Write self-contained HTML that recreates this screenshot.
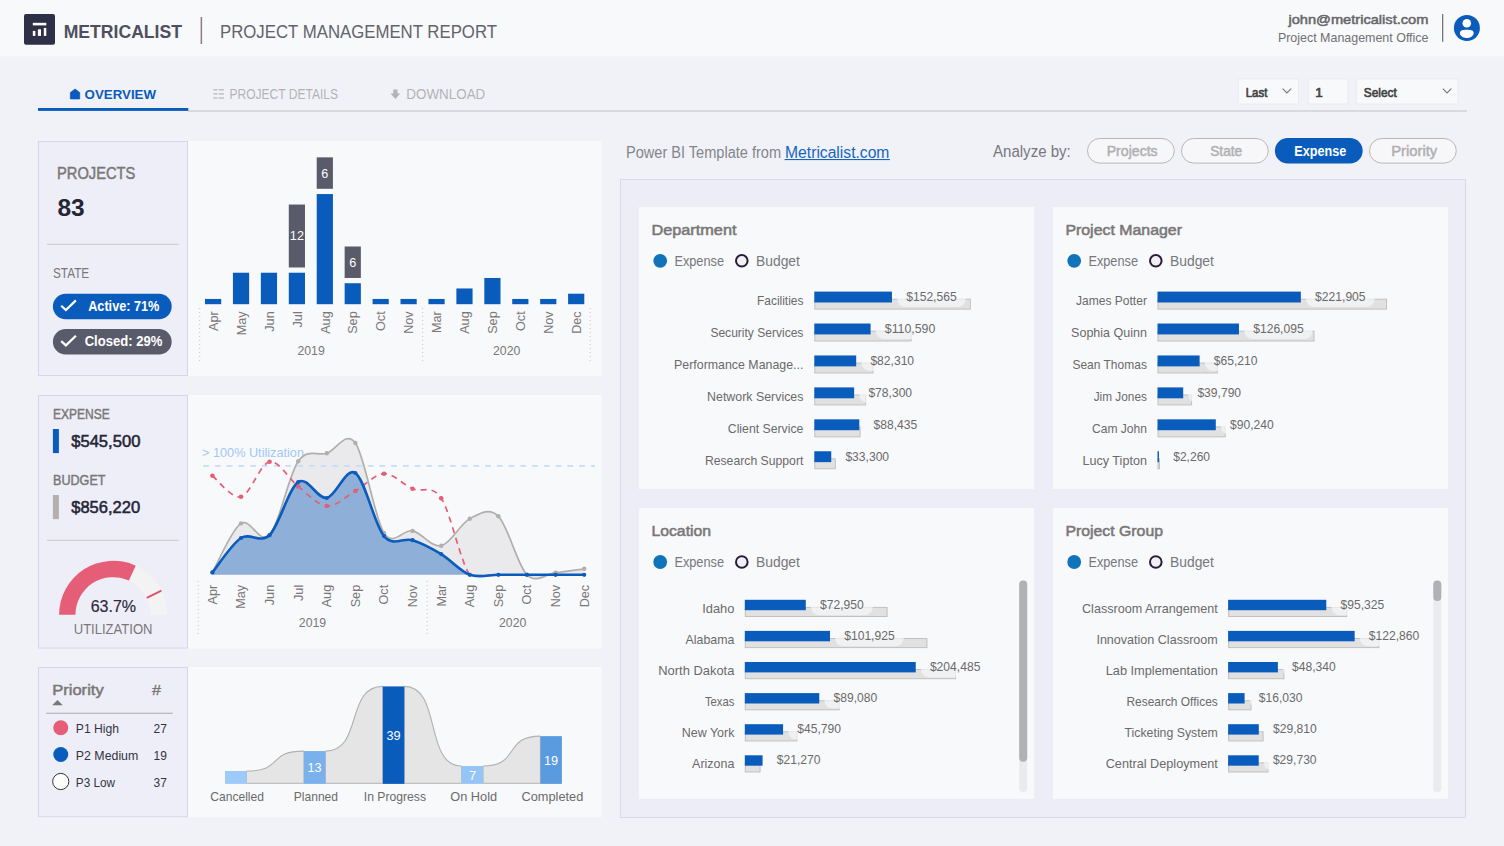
<!DOCTYPE html>
<html lang="en"><head><meta charset="utf-8"><title>Project Management Report</title>
<style>
html,body{margin:0;padding:0;background:#f1f2f8;}
body{width:1504px;height:846px;overflow:hidden;}
svg{display:block;font-family:'Liberation Sans', 'DejaVu Sans', sans-serif;}
</style></head><body>
<svg width="1504" height="846" viewBox="0 0 1504 846">
<rect x="0.00" y="0.00" width="1504.00" height="846.00" fill="#f1f2f8"/>
<rect x="0.00" y="0.00" width="1504.00" height="56.30" fill="#f8f9fb"/>
<rect x="24.00" y="14.00" width="31.00" height="30.70" fill="#2e3047" rx="2"/>
<rect x="32.80" y="22.80" width="13.50" height="2.60" fill="#fff"/>
<rect x="32.80" y="30.90" width="2.60" height="5.00" fill="#fff"/>
<rect x="37.90" y="29.30" width="3.10" height="6.60" fill="#fff"/>
<rect x="43.80" y="27.90" width="2.50" height="8.00" fill="#fff"/>
<text x="63.7" y="38.3" font-size="19" fill="#4e4f5f" font-weight="bold" textLength="118.3" lengthAdjust="spacingAndGlyphs">METRICALIST</text>
<rect x="200.60" y="17.00" width="1.50" height="27.00" fill="#8a7f7a"/>
<text x="220.0" y="38.3" font-size="18.5" fill="#63636b" textLength="277.0" lengthAdjust="spacingAndGlyphs">PROJECT MANAGEMENT REPORT</text>
<text x="1428.4" y="24.3" font-size="13.3" fill="#666668" text-anchor="end" textLength="140.0" lengthAdjust="spacingAndGlyphs" stroke="#666668" stroke-width="0.5">john@metricalist.com</text>
<text x="1428.5" y="42.0" font-size="13.3" fill="#707074" text-anchor="end" textLength="150.6" lengthAdjust="spacingAndGlyphs">Project Management Office</text>
<rect x="1442.00" y="14.00" width="1.30" height="27.80" fill="#7d7875"/>
<circle cx="1466.9" cy="27.95" r="13" fill="#0a5cbc"/>
<circle cx="1466.8" cy="23.3" r="4.3" fill="#fff"/>
<path d="M1459.9 33.3 C1459.9 30.4 1462.6 29.8 1466.8 29.8 C1471 29.8 1473.7 30.4 1473.7 33.3 C1473.7 35.6 1470.6 38.1 1466.8 38.1 C1463 38.1 1459.9 35.6 1459.9 33.3 Z" fill="#fff"/>
<rect x="188.00" y="110.40" width="1279.00" height="1.20" fill="#c9c9cc"/>
<rect x="38.00" y="108.00" width="150.30" height="2.90" fill="#0a5cbc"/>
<path d="M70.4 98.9 V92.6 L75.05 89 L79.7 92.6 V98.9 Z" fill="#0a5cbc" stroke="#0a5cbc" stroke-width="0.8" stroke-linejoin="round"/>
<text x="84.6" y="98.6" font-size="13.6" fill="#0a5cbc" font-weight="bold" textLength="71.4" lengthAdjust="spacingAndGlyphs">OVERVIEW</text>
<rect x="213.30" y="89.20" width="4.10" height="1.20" fill="#b5b5b8"/>
<rect x="218.60" y="89.20" width="5.40" height="1.20" fill="#b5b5b8"/>
<rect x="213.30" y="93.30" width="4.10" height="1.20" fill="#b5b5b8"/>
<rect x="218.60" y="93.30" width="5.40" height="1.20" fill="#b5b5b8"/>
<rect x="213.30" y="97.40" width="4.10" height="1.20" fill="#b5b5b8"/>
<rect x="218.60" y="97.40" width="5.40" height="1.20" fill="#b5b5b8"/>
<text x="229.5" y="98.5" font-size="14" fill="#b3b3b6" textLength="108.5" lengthAdjust="spacingAndGlyphs">PROJECT DETAILS</text>
<path d="M393.3 89.4 H397.5 V93.6 H400.3 L395.4 99 L390.5 93.6 H393.3 Z" fill="#b3b3b6"/>
<text x="406.3" y="98.5" font-size="14" fill="#b3b3b6" textLength="79.0" lengthAdjust="spacingAndGlyphs">DOWNLOAD</text>
<rect x="1238.20" y="78.90" width="60.30" height="25.10" fill="#f8f9fb" stroke="#eaeaf0" stroke-width="1"/>
<text x="1245.8" y="97.2" font-size="13.1" fill="#454545" textLength="21.5" lengthAdjust="spacingAndGlyphs" stroke="#454545" stroke-width="0.7">Last</text>
<path d="M1282.6 88.6 L1286.9 92.9 L1291.2 88.6" fill="none" stroke="#777" stroke-width="1.1"/>
<rect x="1308.30" y="78.90" width="39.60" height="25.10" fill="#f8f9fb" stroke="#eaeaf0" stroke-width="1"/>
<text x="1315.3" y="97.2" font-size="13.5" fill="#454545" stroke="#454545" stroke-width="0.7">1</text>
<rect x="1356.40" y="78.90" width="101.60" height="25.10" fill="#f8f9fb" stroke="#eaeaf0" stroke-width="1"/>
<text x="1363.8" y="97.2" font-size="13.1" fill="#454545" textLength="32.9" lengthAdjust="spacingAndGlyphs" stroke="#454545" stroke-width="0.7">Select</text>
<path d="M1442.8 88.6 L1447.05 92.9 L1451.3 88.6" fill="none" stroke="#777" stroke-width="1.1"/>
<rect x="38.50" y="141.50" width="149.00" height="234.00" fill="#eeeef8" stroke="#d6d6ea" stroke-width="1"/>
<rect x="188.00" y="141.00" width="413.50" height="235.00" fill="#f8f9fb"/>
<text x="57.1" y="178.9" font-size="16.5" fill="#7a7777" textLength="78.2" lengthAdjust="spacingAndGlyphs" stroke="#7a7777" stroke-width="0.5">PROJECTS</text>
<text x="57.4" y="215.7" font-size="24.5" fill="#252536" font-weight="bold" textLength="27.2" lengthAdjust="spacingAndGlyphs">83</text>
<rect x="47.00" y="243.80" width="131.70" height="1.20" fill="#cfcfd2"/>
<text x="53.0" y="278.0" font-size="14" fill="#7a7777" textLength="36.2" lengthAdjust="spacingAndGlyphs">STATE</text>
<rect x="52.90" y="293.70" width="118.80" height="25.50" fill="#0a5cbc" rx="12.75"/>
<path d="M61.2 305.7 L65.9 310.0 L75.9 300.4" fill="none" stroke="#fff" stroke-width="2.2"/>
<text x="88.2" y="311.0" font-size="14.5" fill="#fff" font-weight="bold" textLength="71.2" lengthAdjust="spacingAndGlyphs">Active: 71%</text>
<rect x="52.90" y="329.10" width="118.80" height="25.50" fill="#5a5b6a" rx="12.75"/>
<path d="M61.2 341.1 L65.9 345.4 L75.9 335.8" fill="none" stroke="#fff" stroke-width="2.2"/>
<text x="84.7" y="345.9" font-size="14.5" fill="#fff" font-weight="bold" textLength="77.7" lengthAdjust="spacingAndGlyphs">Closed: 29%</text>
<rect x="205.00" y="298.95" width="16.20" height="5.25" fill="#0a5cbc"/>
<text transform="translate(217.8,311.3) rotate(-90)" font-size="12.67" fill="#7a7777" text-anchor="end">Apr</text>
<rect x="232.93" y="272.73" width="16.20" height="31.47" fill="#0a5cbc"/>
<text transform="translate(245.7,311.3) rotate(-90)" font-size="12.67" fill="#7a7777" text-anchor="end">May</text>
<rect x="260.86" y="272.73" width="16.20" height="31.47" fill="#0a5cbc"/>
<text transform="translate(273.7,311.3) rotate(-90)" font-size="12.67" fill="#7a7777" text-anchor="end">Jun</text>
<rect x="288.79" y="272.73" width="16.20" height="31.47" fill="#0a5cbc"/>
<rect x="288.79" y="204.54" width="16.20" height="62.94" fill="#5a5b6a"/>
<text x="296.9" y="240.4" font-size="12.67" fill="#fff" text-anchor="middle">12</text>
<text transform="translate(301.6,311.3) rotate(-90)" font-size="12.67" fill="#7a7777" text-anchor="end">Jul</text>
<rect x="316.72" y="194.06" width="16.20" height="110.14" fill="#0a5cbc"/>
<rect x="316.72" y="157.34" width="16.20" height="31.47" fill="#5a5b6a"/>
<text x="324.8" y="177.5" font-size="12.67" fill="#fff" text-anchor="middle">6</text>
<text transform="translate(329.5,311.3) rotate(-90)" font-size="12.67" fill="#7a7777" text-anchor="end">Aug</text>
<rect x="344.65" y="283.22" width="16.20" height="20.98" fill="#0a5cbc"/>
<rect x="344.65" y="246.50" width="16.20" height="31.47" fill="#5a5b6a"/>
<text x="352.8" y="266.6" font-size="12.67" fill="#fff" text-anchor="middle">6</text>
<text transform="translate(357.4,311.3) rotate(-90)" font-size="12.67" fill="#7a7777" text-anchor="end">Sep</text>
<rect x="372.58" y="298.95" width="16.20" height="5.25" fill="#0a5cbc"/>
<text transform="translate(385.4,311.3) rotate(-90)" font-size="12.67" fill="#7a7777" text-anchor="end">Oct</text>
<rect x="400.51" y="298.95" width="16.20" height="5.25" fill="#0a5cbc"/>
<text transform="translate(413.3,311.3) rotate(-90)" font-size="12.67" fill="#7a7777" text-anchor="end">Nov</text>
<rect x="428.44" y="298.95" width="16.20" height="5.25" fill="#0a5cbc"/>
<text transform="translate(441.2,311.3) rotate(-90)" font-size="12.67" fill="#7a7777" text-anchor="end">Mar</text>
<rect x="456.37" y="288.46" width="16.20" height="15.73" fill="#0a5cbc"/>
<text transform="translate(469.2,311.3) rotate(-90)" font-size="12.67" fill="#7a7777" text-anchor="end">Aug</text>
<rect x="484.30" y="277.97" width="16.20" height="26.23" fill="#0a5cbc"/>
<text transform="translate(497.1,311.3) rotate(-90)" font-size="12.67" fill="#7a7777" text-anchor="end">Sep</text>
<rect x="512.23" y="298.95" width="16.20" height="5.25" fill="#0a5cbc"/>
<text transform="translate(525.0,311.3) rotate(-90)" font-size="12.67" fill="#7a7777" text-anchor="end">Oct</text>
<rect x="540.16" y="298.95" width="16.20" height="5.25" fill="#0a5cbc"/>
<text transform="translate(553.0,311.3) rotate(-90)" font-size="12.67" fill="#7a7777" text-anchor="end">Nov</text>
<rect x="568.09" y="293.71" width="16.20" height="10.49" fill="#0a5cbc"/>
<text transform="translate(580.9,311.3) rotate(-90)" font-size="12.67" fill="#7a7777" text-anchor="end">Dec</text>
<path d="M199.7 308 V363" stroke="#c4c4c8" stroke-width="1" stroke-dasharray="1 3" fill="none"/>
<path d="M422.6 308 V362.5" stroke="#c4c4c8" stroke-width="1" stroke-dasharray="1 3" fill="none"/>
<path d="M590.2 308 V362.5" stroke="#c4c4c8" stroke-width="1" stroke-dasharray="1 3" fill="none"/>
<text x="311.1" y="354.8" font-size="12.67" fill="#7a7777" text-anchor="middle" textLength="27.3" lengthAdjust="spacingAndGlyphs">2019</text>
<text x="506.7" y="354.8" font-size="12.67" fill="#7a7777" text-anchor="middle" textLength="27.3" lengthAdjust="spacingAndGlyphs">2020</text>
<rect x="38.50" y="395.50" width="149.00" height="252.50" fill="#eeeef8" stroke="#d6d6ea" stroke-width="1"/>
<rect x="188.00" y="395.00" width="413.50" height="253.50" fill="#f8f9fb"/>
<text x="53.0" y="419.0" font-size="14" fill="#7a7777" textLength="56.8" lengthAdjust="spacingAndGlyphs" stroke="#7a7777" stroke-width="0.45">EXPENSE</text>
<rect x="52.90" y="429.00" width="6.00" height="24.10" fill="#0a5cbc"/>
<text x="71.2" y="446.8" font-size="17" fill="#252536" textLength="69.2" lengthAdjust="spacingAndGlyphs" stroke="#252536" stroke-width="0.55">$545,500</text>
<text x="53.0" y="485.0" font-size="14" fill="#7a7777" textLength="52.5" lengthAdjust="spacingAndGlyphs" stroke="#7a7777" stroke-width="0.45">BUDGET</text>
<rect x="52.90" y="495.00" width="6.00" height="24.10" fill="#b3b0ae"/>
<text x="71.2" y="512.5" font-size="17" fill="#252536" textLength="69.0" lengthAdjust="spacingAndGlyphs" stroke="#252536" stroke-width="0.55">$856,220</text>
<rect x="47.00" y="539.80" width="131.70" height="1.20" fill="#cfcfd2"/>
<path d="M59.05 614.85 A54.1 54.1 0 0 1 167.25 614.85 L150.85 614.85 A37.7 37.7 0 0 0 75.45 614.85 Z" fill="#f4f3f3"/>
<path d="M59.05 614.85 A54.1 54.1 0 0 1 135.72 565.68 L128.88 580.59 A37.7 37.7 0 0 0 75.45 614.85 Z" fill="#e65d78"/>
<path d="M146.83 597.91 L161.39 590.59" stroke="#e4506d" stroke-width="2"/>
<text x="113.4" y="611.6" font-size="17" fill="#2b2b3a" text-anchor="middle" textLength="45.4" lengthAdjust="spacingAndGlyphs" stroke="#2b2b3a" stroke-width="0.2">63.7%</text>
<text x="113.1" y="633.9" font-size="14" fill="#7a7777" text-anchor="middle" textLength="78.7" lengthAdjust="spacingAndGlyphs">UTILIZATION</text>
<path d="M212.4 572.4 C217.2 564.2 231.5 529.6 241.0 523.4 C250.5 517.2 260.1 545.8 269.6 535.4 C279.1 525.0 288.7 475.0 298.2 461.3 C307.7 447.6 317.3 456.2 326.8 453.2 C336.3 450.1 345.9 429.7 355.4 443.0 C364.9 456.3 374.5 518.2 384.0 532.9 C393.5 547.5 403.1 528.8 412.6 530.9 C422.1 533.0 431.7 547.8 441.2 545.8 C450.7 543.8 460.3 523.6 469.8 518.7 C479.3 513.8 488.9 506.9 498.4 516.3 C507.9 525.6 517.5 565.4 527.0 574.8 C536.5 584.2 546.1 573.7 555.6 572.7 C565.1 571.7 579.4 569.4 584.2 568.8 L584.2 574.8 L212.4 574.8 Z" fill="#eaeaec"/>
<text x="202.0" y="457.4" font-size="12.67" fill="#a3c8f5" textLength="102.0" lengthAdjust="spacingAndGlyphs">&gt; 100% Utilization</text>
<path d="M202 465.9 H595" stroke="#c6dcf7" stroke-width="1.6" stroke-dasharray="5.7 6.05" stroke-dashoffset="-1.2" fill="none"/>
<path d="M212.4 572.4 C217.2 564.2 231.5 529.6 241.0 523.4 C250.5 517.2 260.1 545.8 269.6 535.4 C279.1 525.0 288.7 475.0 298.2 461.3 C307.7 447.6 317.3 456.2 326.8 453.2 C336.3 450.1 345.9 429.7 355.4 443.0 C364.9 456.3 374.5 518.2 384.0 532.9 C393.5 547.5 403.1 528.8 412.6 530.9 C422.1 533.0 431.7 547.8 441.2 545.8 C450.7 543.8 460.3 523.6 469.8 518.7 C479.3 513.8 488.9 506.9 498.4 516.3 C507.9 525.6 517.5 565.4 527.0 574.8 C536.5 584.2 546.1 573.7 555.6 572.7 C565.1 571.7 579.4 569.4 584.2 568.8" fill="none" stroke="#b1afac" stroke-width="1.7"/>
<circle cx="212.4" cy="572.4" r="2.2" fill="#b1afac"/>
<circle cx="241.0" cy="523.4" r="2.2" fill="#b1afac"/>
<circle cx="269.6" cy="535.4" r="2.2" fill="#b1afac"/>
<circle cx="298.2" cy="461.3" r="2.2" fill="#b1afac"/>
<circle cx="326.8" cy="453.2" r="2.2" fill="#b1afac"/>
<circle cx="355.4" cy="443.0" r="2.2" fill="#b1afac"/>
<circle cx="384.0" cy="532.9" r="2.2" fill="#b1afac"/>
<circle cx="412.6" cy="530.9" r="2.2" fill="#b1afac"/>
<circle cx="441.2" cy="545.8" r="2.2" fill="#b1afac"/>
<circle cx="469.8" cy="518.7" r="2.2" fill="#b1afac"/>
<circle cx="498.4" cy="516.3" r="2.2" fill="#b1afac"/>
<circle cx="527.0" cy="574.8" r="2.2" fill="#b1afac"/>
<circle cx="555.6" cy="572.7" r="2.2" fill="#b1afac"/>
<circle cx="584.2" cy="568.8" r="2.2" fill="#b1afac"/>
<path d="M212.4 572.4 C217.2 566.7 231.5 544.2 241.0 538.0 C250.5 531.8 260.1 544.3 269.6 535.0 C279.1 525.7 288.7 488.2 298.2 482.0 C307.7 475.8 317.3 499.5 326.8 498.0 C336.3 496.5 345.9 466.6 355.4 473.0 C364.9 479.4 374.5 524.9 384.0 536.1 C393.5 547.3 403.1 537.2 412.6 540.2 C422.1 543.2 431.7 548.3 441.2 554.1 C450.7 559.9 460.3 571.3 469.8 574.8 C479.3 578.2 488.9 574.8 498.4 574.8 C507.9 574.8 517.5 574.8 527.0 574.8 C536.5 574.8 546.1 574.8 555.6 574.8 C565.1 574.8 579.4 574.8 584.2 574.8 L584.2 574.8 L212.4 574.8 Z" fill="#0a5cbc" fill-opacity="0.41"/>
<path d="M212.4 475.7 C217.2 479.2 231.5 499.1 241.0 496.8 C250.5 494.5 260.1 463.5 269.6 461.8 C279.1 460.1 288.7 479.0 298.2 486.4 C307.7 493.8 317.3 505.2 326.8 506.0 C336.3 506.8 345.9 496.4 355.4 491.0 C364.9 485.6 374.5 474.1 384.0 473.7 C393.5 473.3 403.1 484.7 412.6 488.8 C422.1 492.9 431.7 483.9 441.2 498.2 C450.7 512.5 460.3 562.0 469.8 574.8 C479.3 577.5 488.9 574.8 498.4 574.8 C507.9 574.8 517.5 574.8 527.0 574.8 C536.5 574.8 546.1 574.8 555.6 574.8 C565.1 574.8 579.4 574.8 584.2 574.8" fill="none" stroke="#e65d78" stroke-width="1.7" stroke-dasharray="6 5"/>
<circle cx="212.4" cy="475.7" r="2.3" fill="#e65d78"/>
<circle cx="241.0" cy="496.8" r="2.3" fill="#e65d78"/>
<circle cx="269.6" cy="461.8" r="2.3" fill="#e65d78"/>
<circle cx="298.2" cy="486.4" r="2.3" fill="#e65d78"/>
<circle cx="326.8" cy="506.0" r="2.3" fill="#e65d78"/>
<circle cx="355.4" cy="491.0" r="2.3" fill="#e65d78"/>
<circle cx="384.0" cy="473.7" r="2.3" fill="#e65d78"/>
<circle cx="412.6" cy="488.8" r="2.3" fill="#e65d78"/>
<circle cx="441.2" cy="498.2" r="2.3" fill="#e65d78"/>
<path d="M212.4 572.4 C217.2 566.7 231.5 544.2 241.0 538.0 C250.5 531.8 260.1 544.3 269.6 535.0 C279.1 525.7 288.7 488.2 298.2 482.0 C307.7 475.8 317.3 499.5 326.8 498.0 C336.3 496.5 345.9 466.6 355.4 473.0 C364.9 479.4 374.5 524.9 384.0 536.1 C393.5 547.3 403.1 537.2 412.6 540.2 C422.1 543.2 431.7 548.3 441.2 554.1 C450.7 559.9 460.3 571.3 469.8 574.8 C479.3 578.2 488.9 574.8 498.4 574.8 C507.9 574.8 517.5 574.8 527.0 574.8 C536.5 574.8 546.1 574.8 555.6 574.8 C565.1 574.8 579.4 574.8 584.2 574.8" fill="none" stroke="#0a5cbc" stroke-width="2.6" stroke-linejoin="round"/>
<circle cx="212.4" cy="572.4" r="2.1" fill="#0a5cbc"/>
<circle cx="241.0" cy="538.0" r="2.1" fill="#0a5cbc"/>
<circle cx="269.6" cy="535.0" r="2.1" fill="#0a5cbc"/>
<circle cx="298.2" cy="482.0" r="2.1" fill="#0a5cbc"/>
<circle cx="326.8" cy="498.0" r="2.1" fill="#0a5cbc"/>
<circle cx="355.4" cy="473.0" r="2.1" fill="#0a5cbc"/>
<circle cx="384.0" cy="536.1" r="2.1" fill="#0a5cbc"/>
<circle cx="412.6" cy="540.2" r="2.1" fill="#0a5cbc"/>
<circle cx="441.2" cy="554.1" r="2.1" fill="#0a5cbc"/>
<circle cx="469.8" cy="574.8" r="2.1" fill="#0a5cbc"/>
<circle cx="498.4" cy="574.8" r="2.1" fill="#0a5cbc"/>
<circle cx="527.0" cy="574.8" r="2.1" fill="#0a5cbc"/>
<circle cx="555.6" cy="574.8" r="2.1" fill="#0a5cbc"/>
<circle cx="584.2" cy="574.8" r="2.1" fill="#0a5cbc"/>
<text transform="translate(216.7,584.8) rotate(-90)" font-size="12.67" fill="#7a7777" text-anchor="end">Apr</text>
<text transform="translate(245.3,584.8) rotate(-90)" font-size="12.67" fill="#7a7777" text-anchor="end">May</text>
<text transform="translate(273.9,584.8) rotate(-90)" font-size="12.67" fill="#7a7777" text-anchor="end">Jun</text>
<text transform="translate(302.5,584.8) rotate(-90)" font-size="12.67" fill="#7a7777" text-anchor="end">Jul</text>
<text transform="translate(331.1,584.8) rotate(-90)" font-size="12.67" fill="#7a7777" text-anchor="end">Aug</text>
<text transform="translate(359.7,584.8) rotate(-90)" font-size="12.67" fill="#7a7777" text-anchor="end">Sep</text>
<text transform="translate(388.3,584.8) rotate(-90)" font-size="12.67" fill="#7a7777" text-anchor="end">Oct</text>
<text transform="translate(416.9,584.8) rotate(-90)" font-size="12.67" fill="#7a7777" text-anchor="end">Nov</text>
<text transform="translate(445.5,584.8) rotate(-90)" font-size="12.67" fill="#7a7777" text-anchor="end">Mar</text>
<text transform="translate(474.1,584.8) rotate(-90)" font-size="12.67" fill="#7a7777" text-anchor="end">Aug</text>
<text transform="translate(502.7,584.8) rotate(-90)" font-size="12.67" fill="#7a7777" text-anchor="end">Sep</text>
<text transform="translate(531.3,584.8) rotate(-90)" font-size="12.67" fill="#7a7777" text-anchor="end">Oct</text>
<text transform="translate(559.9,584.8) rotate(-90)" font-size="12.67" fill="#7a7777" text-anchor="end">Nov</text>
<text transform="translate(588.5,584.8) rotate(-90)" font-size="12.67" fill="#7a7777" text-anchor="end">Dec</text>
<path d="M198.2 581 V635.5" stroke="#c4c4c8" stroke-width="1" stroke-dasharray="1 3" fill="none"/>
<path d="M427.2 581 V635.5" stroke="#c4c4c8" stroke-width="1" stroke-dasharray="1 3" fill="none"/>
<text x="312.5" y="626.6" font-size="12.67" fill="#7a7777" text-anchor="middle" textLength="27.3" lengthAdjust="spacingAndGlyphs">2019</text>
<text x="512.7" y="626.6" font-size="12.67" fill="#7a7777" text-anchor="middle" textLength="27.3" lengthAdjust="spacingAndGlyphs">2020</text>
<rect x="38.50" y="667.50" width="149.00" height="149.20" fill="#eeeef8" stroke="#d6d6ea" stroke-width="1"/>
<rect x="188.00" y="667.00" width="413.50" height="150.20" fill="#f8f9fb"/>
<text x="52.2" y="695.0" font-size="15.5" fill="#7a7777" textLength="51.5" lengthAdjust="spacingAndGlyphs" stroke="#7a7777" stroke-width="0.5">Priority</text>
<text x="152.0" y="695.0" font-size="15.5" fill="#7a7777" textLength="9.0" lengthAdjust="spacingAndGlyphs" stroke="#7a7777" stroke-width="0.4">#</text>
<path d="M52.2 705.3 L57.5 700 L62.8 705.3 Z" fill="#7a7777"/>
<rect x="46.20" y="712.70" width="126.50" height="1.20" fill="#b5b3b3"/>
<circle cx="60.75" cy="727.75" r="7.5" fill="#e65d78"/>
<text x="75.8" y="733.0" font-size="13.3" fill="#33333d" textLength="43.2" lengthAdjust="spacingAndGlyphs">P1 High</text>
<text x="153.5" y="733.0" font-size="13.3" fill="#33333d" textLength="13.3" lengthAdjust="spacingAndGlyphs">27</text>
<circle cx="60.75" cy="754.5" r="7.5" fill="#0a5cbc"/>
<text x="75.8" y="759.8" font-size="13.3" fill="#33333d" textLength="62.5" lengthAdjust="spacingAndGlyphs">P2 Medium</text>
<text x="153.5" y="759.8" font-size="13.3" fill="#33333d" textLength="13.3" lengthAdjust="spacingAndGlyphs">19</text>
<circle cx="60.75" cy="781.5" r="8.1" fill="#fdfdfd" stroke="#333" stroke-width="1"/>
<text x="75.8" y="786.8" font-size="13.3" fill="#33333d" textLength="39.2" lengthAdjust="spacingAndGlyphs">P3 Low</text>
<text x="153.5" y="786.8" font-size="13.3" fill="#33333d" textLength="13.3" lengthAdjust="spacingAndGlyphs">37</text>
<path d="M246.5 771.0 C284.4 771.0 266.0 751.1 303.9 751.1 V783.4 H246.5 Z" fill="#e5e5e6"/>
<path d="M246.5 771.0 C284.4 771.0 266.0 751.1 303.9 751.1" fill="none" stroke="#b3b1ae" stroke-width="1.1"/>
<path d="M246.5 783.4 H303.9" fill="none" stroke="#c2c0be" stroke-width="1.1"/>
<path d="M246.5 771.0 V783.4 M303.9 751.1 V783.4" fill="none" stroke="#b9b7b4" stroke-width="1"/>
<path d="M325.4 751.1 C363.3 751.1 344.9 686.4 382.8 686.4 V783.4 H325.4 Z" fill="#e5e5e6"/>
<path d="M325.4 751.1 C363.3 751.1 344.9 686.4 382.8 686.4" fill="none" stroke="#b3b1ae" stroke-width="1.1"/>
<path d="M325.4 783.4 H382.8" fill="none" stroke="#c2c0be" stroke-width="1.1"/>
<path d="M325.4 751.1 V783.4 M382.8 686.4 V783.4" fill="none" stroke="#b9b7b4" stroke-width="1"/>
<path d="M404.3 686.4 C442.1 686.4 423.8 766.0 461.6 766.0 V783.4 H404.3 Z" fill="#e5e5e6"/>
<path d="M404.3 686.4 C442.1 686.4 423.8 766.0 461.6 766.0" fill="none" stroke="#b3b1ae" stroke-width="1.1"/>
<path d="M404.3 783.4 H461.6" fill="none" stroke="#c2c0be" stroke-width="1.1"/>
<path d="M404.3 686.4 V783.4 M461.6 766.0 V783.4" fill="none" stroke="#b9b7b4" stroke-width="1"/>
<path d="M483.1 766.0 C520.9 766.0 502.6 736.1 540.4 736.1 V783.4 H483.1 Z" fill="#e5e5e6"/>
<path d="M483.1 766.0 C520.9 766.0 502.6 736.1 540.4 736.1" fill="none" stroke="#b3b1ae" stroke-width="1.1"/>
<path d="M483.1 783.4 H540.4" fill="none" stroke="#c2c0be" stroke-width="1.1"/>
<path d="M483.1 766.0 V783.4 M540.4 736.1 V783.4" fill="none" stroke="#b9b7b4" stroke-width="1"/>
<rect x="225.00" y="770.97" width="21.50" height="12.93" fill="#9ccbf9"/>
<text x="237.1" y="800.8" font-size="12.67" fill="#6b6b6b" text-anchor="middle" textLength="53.8" lengthAdjust="spacingAndGlyphs">Cancelled</text>
<rect x="303.90" y="751.07" width="21.50" height="32.83" fill="#78b1ec"/>
<text x="314.6" y="772.1" font-size="12.67" fill="#fff" text-anchor="middle">13</text>
<text x="315.9" y="800.8" font-size="12.67" fill="#6b6b6b" text-anchor="middle" textLength="44.2" lengthAdjust="spacingAndGlyphs">Planned</text>
<rect x="382.80" y="686.41" width="21.50" height="97.49" fill="#0a5cbc"/>
<text x="393.6" y="739.8" font-size="12.67" fill="#fff" text-anchor="middle">39</text>
<text x="394.9" y="800.8" font-size="12.67" fill="#6b6b6b" text-anchor="middle" textLength="62.2" lengthAdjust="spacingAndGlyphs">In Progress</text>
<rect x="461.60" y="765.99" width="21.50" height="17.91" fill="#95c5f7"/>
<text x="472.4" y="779.6" font-size="12.67" fill="#fff" text-anchor="middle">7</text>
<text x="473.7" y="800.8" font-size="12.67" fill="#6b6b6b" text-anchor="middle" textLength="46.8" lengthAdjust="spacingAndGlyphs">On Hold</text>
<rect x="540.40" y="736.15" width="21.50" height="47.75" fill="#5a9be0"/>
<text x="551.1" y="764.7" font-size="12.67" fill="#fff" text-anchor="middle">19</text>
<text x="552.4" y="800.8" font-size="12.67" fill="#6b6b6b" text-anchor="middle" textLength="61.7" lengthAdjust="spacingAndGlyphs">Completed</text>
<text x="626.0" y="157.7" font-size="15.6" fill="#85858a" textLength="155.0" lengthAdjust="spacingAndGlyphs">Power BI Template from</text>
<text x="785.1" y="157.7" font-size="15.6" fill="#1565c0" textLength="104.3" lengthAdjust="spacingAndGlyphs">Metricalist.com</text>
<rect x="784.60" y="159.00" width="105.30" height="1.10" fill="#1565c0"/>
<text x="993.0" y="157.4" font-size="16" fill="#77777c" textLength="77.8" lengthAdjust="spacingAndGlyphs">Analyze by:</text>
<rect x="1087.50" y="138.50" width="86.80" height="24.60" fill="#f7f7fa" rx="12.3" stroke="#b9b7b6" stroke-width="1"/>
<text x="1132.2" y="155.9" font-size="14.5" fill="#b0b0b3" text-anchor="middle" textLength="51.0" lengthAdjust="spacingAndGlyphs" stroke="#b0b0b3" stroke-width="0.5">Projects</text>
<rect x="1181.50" y="138.50" width="86.80" height="24.60" fill="#f7f7fa" rx="12.3" stroke="#b9b7b6" stroke-width="1"/>
<text x="1226.2" y="155.9" font-size="14.5" fill="#b0b0b3" text-anchor="middle" textLength="32.0" lengthAdjust="spacingAndGlyphs" stroke="#b0b0b3" stroke-width="0.5">State</text>
<rect x="1274.90" y="138.00" width="87.80" height="25.60" fill="#0a5cbc" rx="12.8"/>
<text x="1320.3" y="155.9" font-size="14.5" fill="#fff" font-weight="bold" text-anchor="middle" textLength="51.9" lengthAdjust="spacingAndGlyphs">Expense</text>
<rect x="1369.50" y="138.50" width="86.80" height="24.60" fill="#f7f7fa" rx="12.3" stroke="#b9b7b6" stroke-width="1"/>
<text x="1414.2" y="155.9" font-size="14.5" fill="#b0b0b3" text-anchor="middle" textLength="46.0" lengthAdjust="spacingAndGlyphs" stroke="#b0b0b3" stroke-width="0.5">Priority</text>
<rect x="620.50" y="179.50" width="845.00" height="638.00" fill="#ededf7" stroke="#d9d9ed" stroke-width="1"/>
<rect x="639.00" y="207.00" width="395.00" height="282.00" fill="#f8f9fb"/>
<text x="651.4" y="235.1" font-size="15.5" fill="#7a7777" textLength="85.1" lengthAdjust="spacingAndGlyphs" stroke="#7a7777" stroke-width="0.55">Department</text>
<circle cx="660.2" cy="260.8" r="6.9" fill="#1173b9"/>
<text x="674.4" y="266.1" font-size="14" fill="#77777c" textLength="49.6" lengthAdjust="spacingAndGlyphs">Expense</text>
<circle cx="741.8" cy="260.8" r="5.8" fill="#f1f0f3" stroke="#2c1a3e" stroke-width="2"/>
<text x="756.0" y="266.1" font-size="14" fill="#77777c" textLength="43.9" lengthAdjust="spacingAndGlyphs">Budget</text>
<rect x="814.80" y="299.20" width="155.50" height="9.90" fill="#e1e1e2" stroke="#c3c1bf" stroke-width="1"/>
<rect x="897.16" y="287.00" width="68.50" height="20.00" fill="#f8f9fb" rx="8" opacity="0.66"/>
<rect x="814.30" y="291.60" width="77.66" height="10.90" fill="#0a5cbc"/>
<text x="906.2" y="301.1" font-size="12.67" fill="#6a6a6a" textLength="50.5" lengthAdjust="spacingAndGlyphs">$152,565</text>
<text x="803.4" y="305.0" font-size="12.67" fill="#6a6a6a" text-anchor="end" textLength="46.4" lengthAdjust="spacingAndGlyphs">Facilities</text>
<rect x="814.80" y="331.13" width="96.30" height="9.90" fill="#e1e1e2" stroke="#c3c1bf" stroke-width="1"/>
<rect x="875.79" y="318.93" width="68.50" height="20.00" fill="#f8f9fb" rx="8" opacity="0.66"/>
<rect x="814.30" y="323.53" width="56.29" height="10.90" fill="#0a5cbc"/>
<text x="884.8" y="333.0" font-size="12.67" fill="#6a6a6a" textLength="50.5" lengthAdjust="spacingAndGlyphs">$110,590</text>
<text x="803.4" y="336.9" font-size="12.67" fill="#6a6a6a" text-anchor="end" textLength="93.0" lengthAdjust="spacingAndGlyphs">Security Services</text>
<rect x="814.80" y="363.06" width="58.20" height="9.90" fill="#e1e1e2" stroke="#c3c1bf" stroke-width="1"/>
<rect x="861.40" y="350.86" width="61.70" height="20.00" fill="#f8f9fb" rx="8" opacity="0.66"/>
<rect x="814.30" y="355.46" width="41.90" height="10.90" fill="#0a5cbc"/>
<text x="870.4" y="365.0" font-size="12.67" fill="#6a6a6a" textLength="43.7" lengthAdjust="spacingAndGlyphs">$82,310</text>
<text x="803.4" y="368.9" font-size="12.67" fill="#6a6a6a" text-anchor="end" textLength="129.3" lengthAdjust="spacingAndGlyphs">Performance Manage...</text>
<rect x="814.80" y="394.99" width="50.80" height="9.90" fill="#e1e1e2" stroke="#c3c1bf" stroke-width="1"/>
<rect x="859.35" y="382.79" width="61.70" height="20.00" fill="#f8f9fb" rx="8" opacity="0.66"/>
<rect x="814.30" y="387.39" width="39.85" height="10.90" fill="#0a5cbc"/>
<text x="868.4" y="396.9" font-size="12.67" fill="#6a6a6a" textLength="43.7" lengthAdjust="spacingAndGlyphs">$78,300</text>
<text x="803.4" y="400.8" font-size="12.67" fill="#6a6a6a" text-anchor="end" textLength="96.3" lengthAdjust="spacingAndGlyphs">Network Services</text>
<rect x="814.80" y="426.92" width="45.30" height="9.90" fill="#e1e1e2" stroke="#c3c1bf" stroke-width="1"/>
<rect x="864.51" y="414.72" width="61.70" height="20.00" fill="#f8f9fb" rx="8" opacity="0.66"/>
<rect x="814.30" y="419.32" width="45.01" height="10.90" fill="#0a5cbc"/>
<text x="873.5" y="428.8" font-size="12.67" fill="#6a6a6a" textLength="43.7" lengthAdjust="spacingAndGlyphs">$88,435</text>
<text x="803.4" y="432.7" font-size="12.67" fill="#6a6a6a" text-anchor="end" textLength="75.6" lengthAdjust="spacingAndGlyphs">Client Service</text>
<rect x="814.80" y="458.85" width="20.50" height="9.90" fill="#e1e1e2" stroke="#c3c1bf" stroke-width="1"/>
<rect x="836.45" y="446.65" width="61.70" height="20.00" fill="#f8f9fb" rx="8" opacity="0.66"/>
<rect x="814.30" y="451.25" width="16.95" height="10.90" fill="#0a5cbc"/>
<text x="845.4" y="460.8" font-size="12.67" fill="#6a6a6a" textLength="43.7" lengthAdjust="spacingAndGlyphs">$33,300</text>
<text x="803.4" y="464.6" font-size="12.67" fill="#6a6a6a" text-anchor="end" textLength="98.5" lengthAdjust="spacingAndGlyphs">Research Support</text>
<rect x="1053.00" y="207.00" width="395.00" height="282.00" fill="#f8f9fb"/>
<text x="1065.4" y="235.1" font-size="15.5" fill="#7a7777" textLength="116.6" lengthAdjust="spacingAndGlyphs" stroke="#7a7777" stroke-width="0.55">Project Manager</text>
<circle cx="1074.2" cy="260.8" r="6.9" fill="#1173b9"/>
<text x="1088.4" y="266.1" font-size="14" fill="#77777c" textLength="49.6" lengthAdjust="spacingAndGlyphs">Expense</text>
<circle cx="1155.8" cy="260.8" r="5.8" fill="#f1f0f3" stroke="#2c1a3e" stroke-width="2"/>
<text x="1170.0" y="266.1" font-size="14" fill="#77777c" textLength="43.9" lengthAdjust="spacingAndGlyphs">Budget</text>
<rect x="1158.00" y="299.20" width="228.50" height="9.90" fill="#e1e1e2" stroke="#c3c1bf" stroke-width="1"/>
<rect x="1306.05" y="287.00" width="68.50" height="20.00" fill="#f8f9fb" rx="8" opacity="0.66"/>
<rect x="1157.50" y="291.60" width="143.35" height="10.90" fill="#0a5cbc"/>
<text x="1315.1" y="301.1" font-size="12.67" fill="#6a6a6a" textLength="50.5" lengthAdjust="spacingAndGlyphs">$221,905</text>
<text x="1146.9" y="305.0" font-size="12.67" fill="#6a6a6a" text-anchor="end" textLength="70.9" lengthAdjust="spacingAndGlyphs">James Potter</text>
<rect x="1158.00" y="331.13" width="156.00" height="9.90" fill="#e1e1e2" stroke="#c3c1bf" stroke-width="1"/>
<rect x="1244.16" y="318.93" width="68.50" height="20.00" fill="#f8f9fb" rx="8" opacity="0.66"/>
<rect x="1157.50" y="323.53" width="81.46" height="10.90" fill="#0a5cbc"/>
<text x="1253.2" y="333.0" font-size="12.67" fill="#6a6a6a" textLength="50.5" lengthAdjust="spacingAndGlyphs">$126,095</text>
<text x="1146.9" y="336.9" font-size="12.67" fill="#6a6a6a" text-anchor="end" textLength="75.8" lengthAdjust="spacingAndGlyphs">Sophia Quinn</text>
<rect x="1158.00" y="363.06" width="59.30" height="9.90" fill="#e1e1e2" stroke="#c3c1bf" stroke-width="1"/>
<rect x="1204.83" y="350.86" width="61.70" height="20.00" fill="#f8f9fb" rx="8" opacity="0.66"/>
<rect x="1157.50" y="355.46" width="42.13" height="10.90" fill="#0a5cbc"/>
<text x="1213.8" y="365.0" font-size="12.67" fill="#6a6a6a" textLength="43.7" lengthAdjust="spacingAndGlyphs">$65,210</text>
<text x="1146.9" y="368.9" font-size="12.67" fill="#6a6a6a" text-anchor="end" textLength="74.5" lengthAdjust="spacingAndGlyphs">Sean Thomas</text>
<rect x="1158.00" y="394.99" width="33.60" height="9.90" fill="#e1e1e2" stroke="#c3c1bf" stroke-width="1"/>
<rect x="1188.40" y="382.79" width="61.70" height="20.00" fill="#f8f9fb" rx="8" opacity="0.66"/>
<rect x="1157.50" y="387.39" width="25.70" height="10.90" fill="#0a5cbc"/>
<text x="1197.4" y="396.9" font-size="12.67" fill="#6a6a6a" textLength="43.7" lengthAdjust="spacingAndGlyphs">$39,790</text>
<text x="1146.9" y="400.8" font-size="12.67" fill="#6a6a6a" text-anchor="end" textLength="53.2" lengthAdjust="spacingAndGlyphs">Jim Jones</text>
<rect x="1158.00" y="426.92" width="67.20" height="9.90" fill="#e1e1e2" stroke="#c3c1bf" stroke-width="1"/>
<rect x="1221.00" y="414.72" width="61.70" height="20.00" fill="#f8f9fb" rx="8" opacity="0.66"/>
<rect x="1157.50" y="419.32" width="58.30" height="10.90" fill="#0a5cbc"/>
<text x="1230.0" y="428.8" font-size="12.67" fill="#6a6a6a" textLength="43.7" lengthAdjust="spacingAndGlyphs">$90,240</text>
<text x="1146.9" y="432.7" font-size="12.67" fill="#6a6a6a" text-anchor="end" textLength="54.9" lengthAdjust="spacingAndGlyphs">Cam John</text>
<rect x="1158.00" y="458.85" width="1.50" height="9.90" fill="#e1e1e2" stroke="#c3c1bf" stroke-width="1"/>
<rect x="1164.16" y="446.65" width="54.90" height="20.00" fill="#f8f9fb" rx="8" opacity="0.66"/>
<rect x="1157.50" y="451.25" width="1.46" height="10.90" fill="#0a5cbc"/>
<text x="1173.2" y="460.8" font-size="12.67" fill="#6a6a6a" textLength="36.9" lengthAdjust="spacingAndGlyphs">$2,260</text>
<text x="1146.9" y="464.6" font-size="12.67" fill="#6a6a6a" text-anchor="end" textLength="64.4" lengthAdjust="spacingAndGlyphs">Lucy Tipton</text>
<rect x="639.00" y="508.20" width="395.00" height="290.60" fill="#f8f9fb"/>
<text x="651.4" y="536.3" font-size="15.5" fill="#7a7777" textLength="59.7" lengthAdjust="spacingAndGlyphs" stroke="#7a7777" stroke-width="0.55">Location</text>
<circle cx="660.2" cy="562.0" r="6.9" fill="#1173b9"/>
<text x="674.4" y="567.3" font-size="14" fill="#77777c" textLength="49.6" lengthAdjust="spacingAndGlyphs">Expense</text>
<circle cx="741.8" cy="562.0" r="5.8" fill="#f1f0f3" stroke="#2c1a3e" stroke-width="2"/>
<text x="756.0" y="567.3" font-size="14" fill="#77777c" textLength="43.9" lengthAdjust="spacingAndGlyphs">Budget</text>
<rect x="745.30" y="607.40" width="141.80" height="9.10" fill="#e1e1e2" stroke="#c3c1bf" stroke-width="1"/>
<rect x="810.99" y="595.20" width="61.70" height="20.00" fill="#f8f9fb" rx="8" opacity="0.66"/>
<rect x="744.80" y="599.80" width="60.99" height="10.40" fill="#0a5cbc"/>
<text x="820.0" y="608.6" font-size="12.67" fill="#6a6a6a" textLength="43.7" lengthAdjust="spacingAndGlyphs">$72,950</text>
<text x="734.4" y="612.7" font-size="12.67" fill="#6a6a6a" text-anchor="end" textLength="32.2" lengthAdjust="spacingAndGlyphs">Idaho</text>
<rect x="745.30" y="638.50" width="181.60" height="9.10" fill="#e1e1e2" stroke="#c3c1bf" stroke-width="1"/>
<rect x="835.21" y="626.30" width="68.50" height="20.00" fill="#f8f9fb" rx="8" opacity="0.66"/>
<rect x="744.80" y="630.90" width="85.21" height="10.40" fill="#0a5cbc"/>
<text x="844.2" y="639.7" font-size="12.67" fill="#6a6a6a" textLength="50.5" lengthAdjust="spacingAndGlyphs">$101,925</text>
<text x="734.4" y="643.8" font-size="12.67" fill="#6a6a6a" text-anchor="end" textLength="48.8" lengthAdjust="spacingAndGlyphs">Alabama</text>
<rect x="745.30" y="669.60" width="210.30" height="9.10" fill="#e1e1e2" stroke="#c3c1bf" stroke-width="1"/>
<rect x="920.95" y="657.40" width="68.50" height="20.00" fill="#f8f9fb" rx="8" opacity="0.66"/>
<rect x="744.80" y="662.00" width="170.95" height="10.40" fill="#0a5cbc"/>
<text x="929.9" y="670.8" font-size="12.67" fill="#6a6a6a" textLength="50.5" lengthAdjust="spacingAndGlyphs">$204,485</text>
<text x="734.4" y="674.9" font-size="12.67" fill="#6a6a6a" text-anchor="end" textLength="76.1" lengthAdjust="spacingAndGlyphs">North Dakota</text>
<rect x="745.30" y="700.70" width="93.90" height="9.10" fill="#e1e1e2" stroke="#c3c1bf" stroke-width="1"/>
<rect x="824.47" y="688.50" width="61.70" height="20.00" fill="#f8f9fb" rx="8" opacity="0.66"/>
<rect x="744.80" y="693.10" width="74.47" height="10.40" fill="#0a5cbc"/>
<text x="833.5" y="701.9" font-size="12.67" fill="#6a6a6a" textLength="43.7" lengthAdjust="spacingAndGlyphs">$89,080</text>
<text x="734.4" y="706.0" font-size="12.67" fill="#6a6a6a" text-anchor="end" textLength="29.5" lengthAdjust="spacingAndGlyphs">Texas</text>
<rect x="745.30" y="731.80" width="51.60" height="9.10" fill="#e1e1e2" stroke="#c3c1bf" stroke-width="1"/>
<rect x="788.28" y="719.60" width="61.70" height="20.00" fill="#f8f9fb" rx="8" opacity="0.66"/>
<rect x="744.80" y="724.20" width="38.28" height="10.40" fill="#0a5cbc"/>
<text x="797.3" y="733.0" font-size="12.67" fill="#6a6a6a" textLength="43.7" lengthAdjust="spacingAndGlyphs">$45,790</text>
<text x="734.4" y="737.1" font-size="12.67" fill="#6a6a6a" text-anchor="end" textLength="52.7" lengthAdjust="spacingAndGlyphs">New York</text>
<rect x="745.30" y="762.90" width="14.80" height="9.10" fill="#e1e1e2" stroke="#c3c1bf" stroke-width="1"/>
<rect x="767.78" y="750.70" width="61.70" height="20.00" fill="#f8f9fb" rx="8" opacity="0.66"/>
<rect x="744.80" y="755.30" width="17.78" height="10.40" fill="#0a5cbc"/>
<text x="776.8" y="764.1" font-size="12.67" fill="#6a6a6a" textLength="43.7" lengthAdjust="spacingAndGlyphs">$21,270</text>
<text x="734.4" y="768.2" font-size="12.67" fill="#6a6a6a" text-anchor="end" textLength="42.3" lengthAdjust="spacingAndGlyphs">Arizona</text>
<rect x="1019.20" y="580.40" width="8.00" height="211.90" fill="#ebebef" rx="4"/>
<rect x="1019.20" y="580.40" width="8.00" height="181.40" fill="#b1b1b5" rx="4"/>
<rect x="1053.00" y="508.20" width="395.00" height="290.60" fill="#f8f9fb"/>
<text x="1065.4" y="536.3" font-size="15.5" fill="#7a7777" textLength="97.6" lengthAdjust="spacingAndGlyphs" stroke="#7a7777" stroke-width="0.55">Project Group</text>
<circle cx="1074.2" cy="562.0" r="6.9" fill="#1173b9"/>
<text x="1088.4" y="567.3" font-size="14" fill="#77777c" textLength="49.6" lengthAdjust="spacingAndGlyphs">Expense</text>
<circle cx="1155.8" cy="562.0" r="5.8" fill="#f1f0f3" stroke="#2c1a3e" stroke-width="2"/>
<text x="1170.0" y="567.3" font-size="14" fill="#77777c" textLength="43.9" lengthAdjust="spacingAndGlyphs">Budget</text>
<rect x="1228.60" y="607.40" width="118.10" height="9.10" fill="#e1e1e2" stroke="#c3c1bf" stroke-width="1"/>
<rect x="1331.48" y="595.20" width="61.70" height="20.00" fill="#f8f9fb" rx="8" opacity="0.66"/>
<rect x="1228.10" y="599.80" width="98.18" height="10.40" fill="#0a5cbc"/>
<text x="1340.5" y="608.6" font-size="12.67" fill="#6a6a6a" textLength="43.7" lengthAdjust="spacingAndGlyphs">$95,325</text>
<text x="1217.8" y="612.7" font-size="12.67" fill="#6a6a6a" text-anchor="end" textLength="135.8" lengthAdjust="spacingAndGlyphs">Classroom Arrangement</text>
<rect x="1228.60" y="638.50" width="150.30" height="9.10" fill="#e1e1e2" stroke="#c3c1bf" stroke-width="1"/>
<rect x="1359.85" y="626.30" width="68.50" height="20.00" fill="#f8f9fb" rx="8" opacity="0.66"/>
<rect x="1228.10" y="630.90" width="126.55" height="10.40" fill="#0a5cbc"/>
<text x="1368.8" y="639.7" font-size="12.67" fill="#6a6a6a" textLength="50.5" lengthAdjust="spacingAndGlyphs">$122,860</text>
<text x="1217.8" y="643.8" font-size="12.67" fill="#6a6a6a" text-anchor="end" textLength="121.4" lengthAdjust="spacingAndGlyphs">Innovation Classroom</text>
<rect x="1228.60" y="669.60" width="55.40" height="9.10" fill="#e1e1e2" stroke="#c3c1bf" stroke-width="1"/>
<rect x="1283.09" y="657.40" width="61.70" height="20.00" fill="#f8f9fb" rx="8" opacity="0.66"/>
<rect x="1228.10" y="662.00" width="49.79" height="10.40" fill="#0a5cbc"/>
<text x="1292.1" y="670.8" font-size="12.67" fill="#6a6a6a" textLength="43.7" lengthAdjust="spacingAndGlyphs">$48,340</text>
<text x="1217.8" y="674.9" font-size="12.67" fill="#6a6a6a" text-anchor="end" textLength="112.1" lengthAdjust="spacingAndGlyphs">Lab Implementation</text>
<rect x="1228.60" y="700.70" width="22.50" height="9.10" fill="#e1e1e2" stroke="#c3c1bf" stroke-width="1"/>
<rect x="1249.81" y="688.50" width="61.70" height="20.00" fill="#f8f9fb" rx="8" opacity="0.66"/>
<rect x="1228.10" y="693.10" width="16.51" height="10.40" fill="#0a5cbc"/>
<text x="1258.8" y="701.9" font-size="12.67" fill="#6a6a6a" textLength="43.7" lengthAdjust="spacingAndGlyphs">$16,030</text>
<text x="1217.8" y="706.0" font-size="12.67" fill="#6a6a6a" text-anchor="end" textLength="91.4" lengthAdjust="spacingAndGlyphs">Research Offices</text>
<rect x="1228.60" y="731.80" width="34.50" height="9.10" fill="#e1e1e2" stroke="#c3c1bf" stroke-width="1"/>
<rect x="1264.00" y="719.60" width="61.70" height="20.00" fill="#f8f9fb" rx="8" opacity="0.66"/>
<rect x="1228.10" y="724.20" width="30.70" height="10.40" fill="#0a5cbc"/>
<text x="1273.0" y="733.0" font-size="12.67" fill="#6a6a6a" textLength="43.7" lengthAdjust="spacingAndGlyphs">$29,810</text>
<text x="1217.8" y="737.1" font-size="12.67" fill="#6a6a6a" text-anchor="end" textLength="93.3" lengthAdjust="spacingAndGlyphs">Ticketing System</text>
<rect x="1228.60" y="762.90" width="39.40" height="9.10" fill="#e1e1e2" stroke="#c3c1bf" stroke-width="1"/>
<rect x="1263.92" y="750.70" width="61.70" height="20.00" fill="#f8f9fb" rx="8" opacity="0.66"/>
<rect x="1228.10" y="755.30" width="30.62" height="10.40" fill="#0a5cbc"/>
<text x="1272.9" y="764.1" font-size="12.67" fill="#6a6a6a" textLength="43.7" lengthAdjust="spacingAndGlyphs">$29,730</text>
<text x="1217.8" y="768.2" font-size="12.67" fill="#6a6a6a" text-anchor="end" textLength="112.1" lengthAdjust="spacingAndGlyphs">Central Deployment</text>
<rect x="1433.30" y="580.40" width="8.00" height="211.90" fill="#ebebef" rx="4"/>
<rect x="1433.30" y="580.40" width="8.00" height="20.50" fill="#b1b1b5" rx="4"/>
</svg>
</body></html>
